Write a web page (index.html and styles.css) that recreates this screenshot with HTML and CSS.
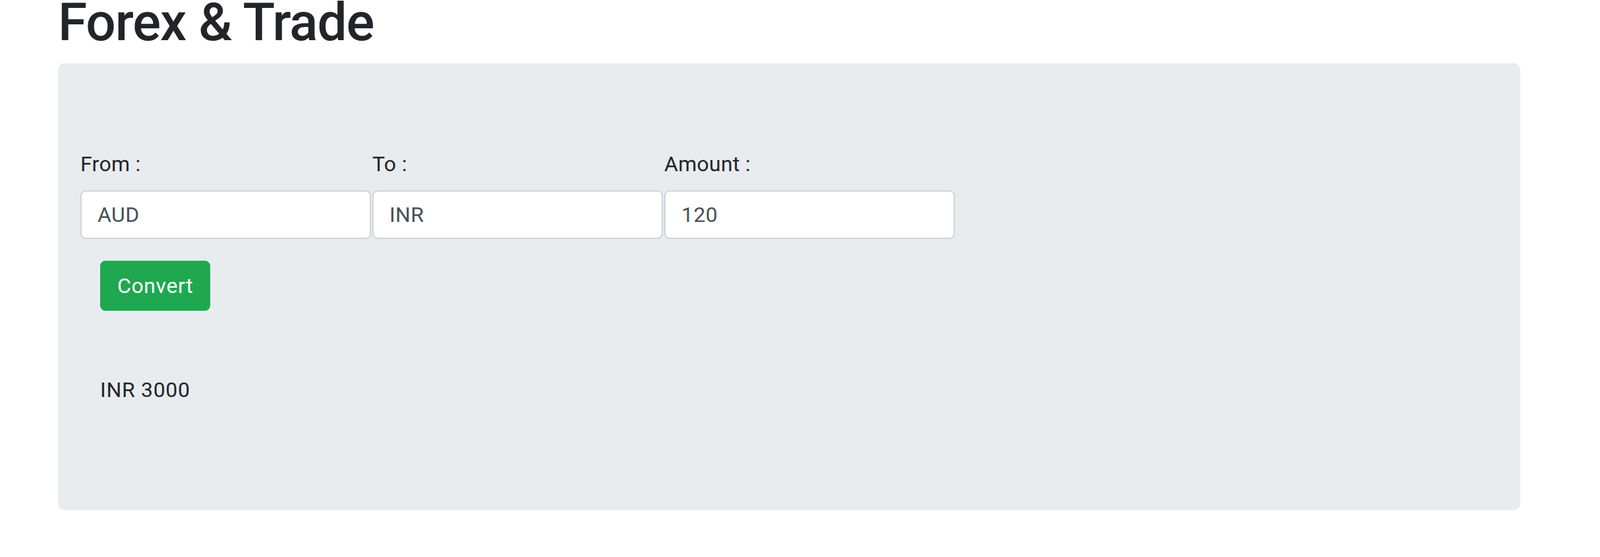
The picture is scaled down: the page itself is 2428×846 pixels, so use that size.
FILE: index.html
```html
<!DOCTYPE html>
<html lang="en">
<head>
<meta charset="utf-8">
<title>Forex &amp; Trade</title>
<link rel="stylesheet" href="styles.css">
</head>
<body>
<div class="page">
  <h1 class="title">Forex &amp; Trade</h1>
  <div class="panel">
    <div class="fields">
      <div class="field">
        <label class="field-label" for="from">From :</label>
        <input class="field-input" id="from" type="text" value="AUD">
      </div>
      <div class="field">
        <label class="field-label" for="to">To :</label>
        <input class="field-input" id="to" type="text" value="INR">
      </div>
      <div class="field">
        <label class="field-label" for="amount">Amount :</label>
        <input class="field-input" id="amount" type="text" value="120">
      </div>
    </div>
    <div class="actions">
      <button class="btn-convert" type="button">Convert</button>
    </div>
    <p class="result">INR 3000</p>
  </div>
</div>
</body>
</html>
```

FILE: styles.css
```css
html, body {
  margin: 0;
  padding: 0;
  background: #ffffff;
}

body {
  font-family: Roboto, "Liberation Sans", Arial, sans-serif;
  color: #212529;
}

.page {
  padding-left: 88px;
}

.title {
  margin: 0 0 28px 0;
  font-size: 80px;
  font-weight: 500;
  line-height: 68px;
  letter-spacing: -1px;
  color: #212529;
}

.panel {
  box-sizing: border-box;
  width: 2219px;
  height: 679px;
  padding: 129px 0 0 34px;
  background: #e9ecef;
  border-radius: 10px;
}

.fields {
  display: grid;
  grid-template-columns: repeat(3, 441px);
  column-gap: 2px;
}

.field-label {
  display: block;
  font-size: 32px;
  line-height: 48px;
  letter-spacing: 0.3px;
  margin-bottom: 16px;
  color: #212529;
}

.field-input {
  display: block;
  box-sizing: border-box;
  width: 100%;
  height: 74px;
  margin: 0;
  padding: 0 24px;
  border: 2px solid #ced4da;
  border-radius: 8px;
  background: #ffffff;
  font-family: Roboto, "Liberation Sans", Arial, sans-serif;
  font-size: 32px;
  letter-spacing: 0.4px;
  color: #495057;
  outline: none;
}

.actions {
  margin-top: 33px;
  padding-left: 30px;
}

.btn-convert {
  box-sizing: border-box;
  height: 76px;
  margin: 0;
  padding: 0 24px;
  border: 2px solid #1fa84f;
  border-radius: 8px;
  background: #1fa84f;
  color: #ffffff;
  font-family: Roboto, "Liberation Sans", Arial, sans-serif;
  font-size: 32px;
  line-height: 48px;
  letter-spacing: 0.6px;
}

.result {
  margin: 96px 0 0 0;
  padding-left: 30px;
  font-size: 32px;
  line-height: 48px;
  letter-spacing: 0.7px;
  color: #212529;
}
```
